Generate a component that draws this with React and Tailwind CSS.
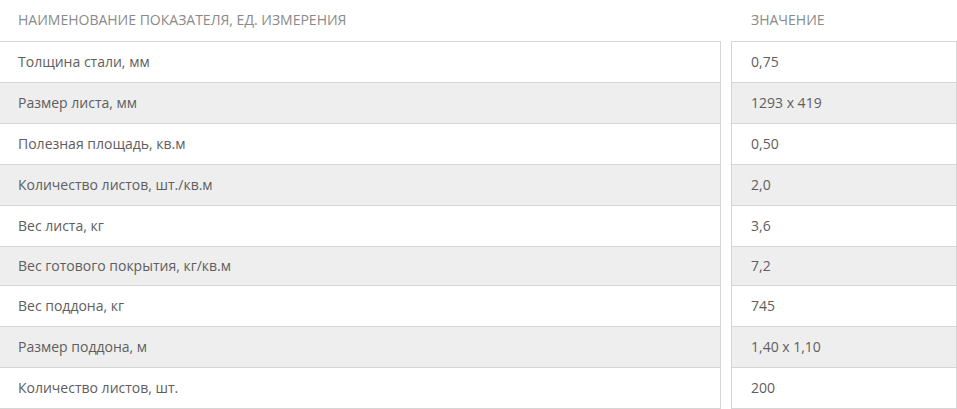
const rows = [
  ['Толщина стали, мм', '0,75', 'h-[41px]'],
  ['Размер листа, мм', '1293 x 419', 'h-[41px]'],
  ['Полезная площадь, кв.м', '0,50', 'h-[41px]'],
  ['Количество листов, шт./кв.м', '2,0', 'h-[41px]'],
  ['Вес листа, кг', '3,6', 'h-[41px]'],
  ['Вес готового покрытия, кг/кв.м', '7,2', 'h-[39px]'],
  ['Вес поддона, кг', '745', 'h-[41px]'],
  ['Размер поддона, м', '1,40 x 1,10', 'h-[41px]'],
  ['Количество листов, шт.', '200', 'h-[41px]'],
];

export default function App() {
  return (
    <div className="w-[957px] h-[409px] bg-white font-['Open_Sans',sans-serif] text-[14px]">
      {/* Header */}
      <div className="flex h-[41px] items-center pb-[2px] text-[#8a8a8a] uppercase">
        <div className="flex-1 pl-[18px]">Наименование показателя, ед. измерения</div>
        <div className="w-[226px] pl-[20px]">Значение</div>
      </div>

      <div className="flex gap-[10px] h-px">
        <div className="flex-1 bg-[#d6d6d6]" />
        <div className="w-[226px] bg-[#d6d6d6]" />
      </div>

      {rows.map(([name, value, h], i) => {
        const bg = i % 2 === 1 ? 'bg-[#eeeeee]' : 'bg-white';
        return (
          <div key={name} className={`flex gap-[10px] ${h} text-[#5e5e5e]`}>
            <div className={`flex-1 flex items-center pl-[18px] pb-[2px] border-r border-b border-[#d6d6d6] ${bg}`}>
              {name}
            </div>
            <div className={`w-[226px] flex items-center pl-[19px] pb-[2px] border-x border-b border-[#d6d6d6] ${bg}`}>
              {value}
            </div>
          </div>
        );
      })}
    </div>
  );
}
